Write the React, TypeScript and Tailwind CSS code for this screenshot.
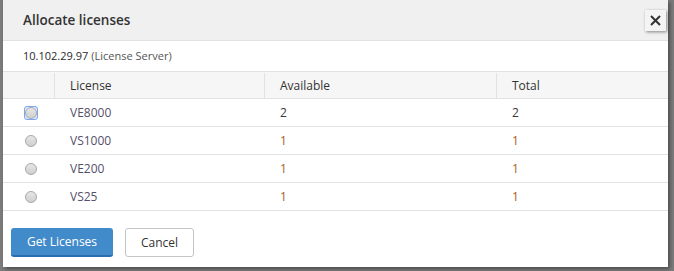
import React from "react";

const rows = [
  { name: "VE8000", available: 2, total: 2, selected: true },
  { name: "VS1000", available: 1, total: 1 },
  { name: "VE200", available: 1, total: 1 },
  { name: "VS25", available: 1, total: 1 },
];

function numColor(n: number) {
  return n === 1 ? "text-[#a8621f]" : "text-[#3a3a3a]";
}

export default function App() {
  return (
    <div className="w-[674px] h-[271px] bg-[#7c7c7c] font-['Open_Sans',sans-serif] overflow-hidden">
      <div className="ml-[3px] w-[665px] h-[267px] bg-white flex flex-col shadow-[2px_2px_4px_rgba(0,0,0,0.4)]">
        {/* Header */}
        <div className="h-[41px] bg-[#f0f0f0] border-b border-[#e2e2e2] flex items-center justify-between pl-[20px] pr-[2px] pt-[1px] shrink-0">
          <h1 className="text-[13.5px] font-semibold text-[#333]">Allocate licenses</h1>
          <button className="w-[21px] h-[21px] bg-[#f4f4f4] shadow-[1px_1px_3px_rgba(0,0,0,0.45)] flex items-center justify-center">
            <svg width="11" height="11" viewBox="0 0 11 11">
              <path d="M1 1L10 10M10 1L1 10" stroke="#333" strokeWidth="2" />
            </svg>
          </button>
        </div>

        {/* Server line */}
        <div className="h-[30px] flex items-center pl-[20px] text-[11px] shrink-0">
          <span className="text-[#2a2a2a] font-medium">10.102.29.97</span>
          <span className="ml-[3px] text-[#555]">(License Server)</span>
        </div>

        {/* Table */}
        <div className="text-[12px]">
          <div className="flex h-[28px] bg-[#f6f6f6] border-y border-[#e2e2e2] text-[#333] pt-[1px]">
            <div className="w-[52px] border-r border-[#e2e2e2]" />
            <div className="w-[210px] border-r border-[#e2e2e2] flex items-center pl-[15px]">License</div>
            <div className="w-[232px] border-r border-[#e2e2e2] flex items-center pl-[15px]">Available</div>
            <div className="flex-1 flex items-center pl-[15px]">Total</div>
          </div>
          {rows.map((r) => (
            <div key={r.name} className="flex h-[28px] border-b border-[#e2e2e2] pt-[1px]">
              <div className="w-[52px] flex items-center pl-[21px]">
                <span
                  className={
                    r.selected
                      ? "w-[14px] h-[14px] rounded-[3px] border border-[#7aa7f0] bg-[#dfe9fb] flex items-center justify-center"
                      : "w-[14px] h-[14px] flex items-center justify-center"
                  }
                >
                  <span className="w-[12px] h-[12px] rounded-full border border-[#a8a8a8] bg-gradient-to-b from-[#e6e6e6] to-[#cfcfcf]" />
                </span>
              </div>
              <div className="w-[210px] flex items-center pl-[15px] text-[#55506a]">{r.name}</div>
              <div className={`w-[232px] flex items-center pl-[15px] ${numColor(r.available)}`}>{r.available}</div>
              <div className={`flex-1 flex items-center pl-[15px] ${numColor(r.total)}`}>{r.total}</div>
            </div>
          ))}
        </div>

        {/* Footer */}
        <div className="flex gap-[12px] pl-[8px] pt-[17px] text-[12px]">
          <button className="w-[102px] h-[29px] bg-[#428bca] border-b-2 border-[#2a6cb0] rounded-[3px] text-white">
            Get Licenses
          </button>
          <button className="w-[69px] h-[29px] bg-white border border-[#c4c4c4] rounded-[3px] text-[#333]">
            Cancel
          </button>
        </div>
      </div>
    </div>
  );
}
